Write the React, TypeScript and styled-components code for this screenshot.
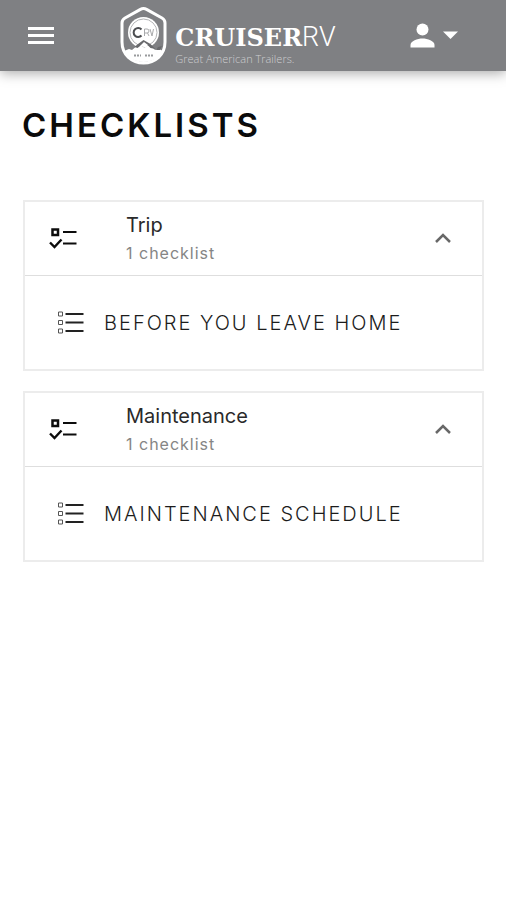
import React, { useState } from "react";
import styled, { createGlobalStyle } from "styled-components";

const GlobalStyle = createGlobalStyle`
  *, *::before, *::after { box-sizing: border-box; }
  body {
    margin: 0;
    background: #fff;
    color: #111;
    font-family: Inter, "Liberation Sans", sans-serif;
  }
`;

const TopBar = styled.header`
  display: flex;
  align-items: center;
  justify-content: space-between;
  height: 71px;
  padding: 0 48px 0 28px;
  background: #7f8083;
  box-shadow: 0 2px 12px rgba(0, 0, 0, 0.35);
`;

const BarButton = styled.button<{ $inset?: boolean }>`
  display: flex;
  align-items: center;
  gap: 8px;
  padding: 0 0 0 ${(p) => (p.$inset ? 8 : 0)}px;
  border: 0;
  background: none;
  color: #fff;
  cursor: pointer;
`;

const Brand = styled.a`
  display: flex;
  align-items: flex-start;
  gap: 8px;
  color: #fff;
  text-decoration: none;
`;

const BrandText = styled.span`
  display: flex;
  flex-direction: column;
  padding-top: 15px;
`;

const BrandName = styled.span`
  display: flex;
  align-items: baseline;
  font: 700 24px/30px "DejaVu Serif", serif;
`;

const BrandSuffix = styled.span`
  font: 300 27px/30px Roboto, sans-serif;
`;

const Tagline = styled.span`
  color: #cdced0;
  font: 300 11px/12px "Open Sans", sans-serif;
`;

const Content = styled.main`
  padding: 36px 22px 24px;
`;

const Title = styled.h1`
  margin: 0 0 57px;
  color: #0b0b0b;
  font-size: 33px;
  font-weight: 600;
  line-height: 36px;
  letter-spacing: 3px;
`;

const Groups = styled.div`
  display: flex;
  flex-direction: column;
  gap: 20px;
  padding-left: 1px;
`;

const Group = styled.section`
  border: 2px solid #ececec;
`;

const GroupHeader = styled.button`
  display: flex;
  align-items: center;
  width: 100%;
  height: 73px;
  padding: 0 30px 0 24px;
  border: 0;
  background: none;
  color: #2a2a2a;
  font-family: inherit;
  text-align: left;
  cursor: pointer;
`;

const GroupText = styled.span`
  display: flex;
  flex: 1;
  flex-direction: column;
  padding-left: 49px;
`;

const GroupName = styled.span`
  font-size: 20px;
  font-weight: 400;
  line-height: 28px;
`;

const GroupCount = styled.span`
  color: #858585;
  font-size: 16px;
  line-height: 28px;
  letter-spacing: 1px;
`;

const Items = styled.ul`
  margin: 0;
  padding: 0;
  border-top: 1px solid #dedede;
  list-style: none;
`;

const ItemLink = styled.a`
  display: flex;
  align-items: center;
  gap: 20px;
  height: 93px;
  padding-left: 33px;
  color: #1c1c1c;
  font-size: 20px;
  font-weight: 300;
  letter-spacing: 2px;
  text-decoration: none;
  text-transform: uppercase;
`;

const MenuIcon = () => (
  <svg width="26" height="20" viewBox="0 0 26 20" fill="currentColor" aria-hidden="true">
    <path d="M0 1h26v3H0zM0 8h26v3H0zM0 15h26v3H0z" />
  </svg>
);

const UserIcon = () => (
  <svg width="25" height="25" viewBox="0 0 25 25" fill="currentColor" aria-hidden="true">
    <circle cx="12.5" cy="6.5" r="6" />
    <path d="M.5 24.5v-2.500c0-4 7-6.500 12-6.500s12 2.500 12 6.500v2.500z" />
  </svg>
);

const CaretIcon = () => (
  <svg width="15" height="9" viewBox="0 0 15 9" fill="currentColor" aria-hidden="true">
    <path d="M0 .5h15L7.500 8z" />
  </svg>
);

const Badge = () => (
  <svg width="47" height="58" viewBox="0 0 47 58" aria-hidden="true">
    <path
      d="M23.500 1.500 Q25 1.500 27 2.600 L42 11 Q45 12.700 45 16 V35 C45 48 35 56 23.500 56 S2 48 2 35 V16 Q2 12.700 5 11 L20 2.600 Q22 1.500 23.500 1.500z"
      fill="#7f8083"
      stroke="#fff"
      strokeWidth="3"
    />
    <path d="M4 44 L9 42 L12 43 L18 38 L24 34 L31 39 L35 43 L39 42 L43 44 C39 51 32 55 23.500 55 S8 51 4 44z" fill="#fff" />
    <circle cx="23.500" cy="25.500" r="15.500" fill="#fff" />
    <circle cx="23.500" cy="25.500" r="13.500" fill="none" stroke="#b4b5b7" strokeWidth="1" />
    <path d="M21.500 28.500 A4.500 4.500 0 1 1 21.500 22.500" fill="none" stroke="#4c4e51" strokeWidth="2" />
    <path d="M24.500 29v-7h2.500q2 0 2 2t-2 2h-2.500m3 0 1.500 3m1-7 2 7 1.500-7" fill="none" stroke="#a9aaac" strokeWidth="1" />
    <path d="M12 42 18 37l5.500-4 7 4 5 5-5-1-3-3-3 3-3-3-4 3-3-1z" fill="#68696c" />
    <path d="m20 39 4-4 4 3-3 3-3-2-3 4z" fill="#fff" />
    <path d="m36 43 2-3 4-1-2 4z" fill="#68696c" />
    <path d="M14 48.500h7m4 0h8" stroke="#999b9d" strokeWidth="2" strokeDasharray="2 1" />
  </svg>
);

const TaskIcon = () => (
  <svg width="28" height="24" viewBox="0 0 28 24" fill="none" stroke="#0c0c0c" aria-hidden="true">
    <path d="M3.500 2.500h5.500v5.500h-5.500z" strokeWidth="2.500" />
    <path d="M14 5h13.500M14 16.500h13.500" strokeWidth="2" />
    <path d="m1 15.500 4.500 4.500 7-7.500" strokeWidth="2.400" />
  </svg>
);

const ListIcon = () => (
  <svg width="26" height="24" viewBox="0 0 26 24" fill="none" stroke="#222" aria-hidden="true">
    <path d="M.5 1h4v4h-4zM.5 9.500h4v4h-4zM.5 18h4v4h-4z" stroke="#555" strokeWidth="1" />
    <path d="M7.500 3h18M7.500 11.500h18M7.500 20h18" strokeWidth="2" />
  </svg>
);

const ChevronIcon = ({ open }: { open: boolean }) => (
  <svg width="18" height="14" viewBox="0 0 18 14" fill="none" stroke="#686868" strokeWidth="2.500" aria-hidden="true">
    <path d={open ? "m2 10 7-7 7 7" : "m2 3 7 7 7-7"} />
  </svg>
);

const groups = [
  { name: "Trip", items: ["Before you leave home"] },
  { name: "Maintenance", items: ["Maintenance schedule"] },
];

function ChecklistGroup({ name, items }: { name: string; items: string[] }) {
  const [open, setOpen] = useState(true);
  return (
    <Group>
      <GroupHeader aria-expanded={open} onClick={() => setOpen(!open)}>
        <TaskIcon />
        <GroupText>
          <GroupName>{name}</GroupName>
          <GroupCount>{items.length} checklist</GroupCount>
        </GroupText>
        <ChevronIcon open={open} />
      </GroupHeader>
      {open && (
        <Items>
          {items.map((item) => (
            <li key={item}>
              <ItemLink href="#">
                <ListIcon />
                {item}
              </ItemLink>
            </li>
          ))}
        </Items>
      )}
    </Group>
  );
}

export default function App() {
  return (
    <>
      <GlobalStyle />
      <TopBar>
        <BarButton aria-label="Menu">
          <MenuIcon />
        </BarButton>
        <Brand href="#">
          <Badge />
          <BrandText>
            <BrandName>
              CRUISER<BrandSuffix>RV</BrandSuffix>
            </BrandName>
            <Tagline>Great American Trailers.</Tagline>
          </BrandText>
        </Brand>
        <BarButton $inset aria-label="Account">
          <UserIcon />
          <CaretIcon />
        </BarButton>
      </TopBar>
      <Content>
        <Title>CHECKLISTS</Title>
        <Groups>
          {groups.map((group) => (
            <ChecklistGroup key={group.name} {...group} />
          ))}
        </Groups>
      </Content>
    </>
  );
}
